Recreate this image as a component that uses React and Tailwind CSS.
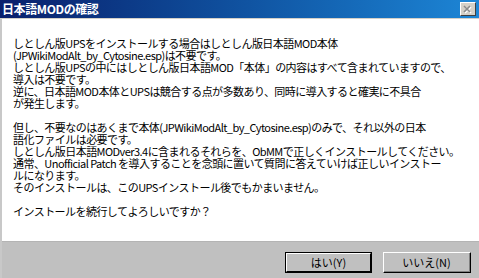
import React from "react";

const lines = [
  "しとしん版UPSをインストールする場合はしとしん版日本語MOD本体",
  "(JPWikiModAlt_by_Cytosine.esp)は不要です。",
  "しとしん版UPSの中にはしとしん版日本語MOD「本体」の内容はすべて含まれていますので、",
  "導入は不要です。",
  "逆に、日本語MOD本体とUPSは競合する点が多数あり、同時に導入すると確実に不具合",
  "が発生します。",
  "",
  "但し、不要なのはあくまで本体(JPWikiModAlt_by_Cytosine.esp)のみで、それ以外の日本",
  "語化ファイルは必要です。",
  "しとしん版日本語MODver3.4に含まれるそれらを、ObMMで正しくインストールしてください。",
  "通常、Unofficial Patch を導入することを念頭に置いて質問に答えていけば正しいインストー",
  "ルになります。",
  "そのインストールは、このUPSインストール後でもかまいません。",
  "",
  "インストールを続行してよろしいですか？",
];

const font = { fontFamily: '"Noto Sans CJK JP", "Noto Sans", sans-serif' };

export default function App() {
  return (
    <div
      className="w-[479px] h-[278px] bg-[#c0c0c0] flex flex-col overflow-hidden text-black"
      style={font}
    >
      <div className="h-[18px] flex items-center justify-between bg-linear-to-r from-[#0a1f6c] to-[#1d86d6] pl-[2px] pr-[3px]">
        <span className="text-white font-bold text-[12px] leading-[18px] tracking-[-0.4px]">
          日本語MODの確認
        </span>
        <div className="w-[16px] h-[14px] bg-[#d4d0c8] border-t border-l border-white border-r border-b border-r-[#404040] border-b-[#404040] flex items-center justify-center">
          <svg width="10" height="9" viewBox="0 0 10 9">
            <path d="M2 2 L8 8 M8 2 L2 8" stroke="#ffffff" strokeWidth="1.6" />
            <path d="M1 1 L7 7 M7 1 L1 7" stroke="#8a8a8a" strokeWidth="1.6" />
          </svg>
        </div>
      </div>
      <div className="h-px bg-[#d4d0c8]" />
      <div className="flex-1 flex flex-col border-l-2 border-[#c8c8c8]">
        <div className="bg-white h-[222px] pt-[18px] pl-[11px]">
          {lines.map((l, i) => (
            <div
              key={i}
              className="h-[12px] leading-[12px] text-[11px] whitespace-nowrap tracking-[-0.55px]"
            >
              {l}
            </div>
          ))}
        </div>
        <div className="h-px bg-[#b4b4b4]" />
        <div className="flex justify-end gap-[11px] pr-[8px] pt-[10px]">
          <div className="w-[87px] h-[21px] border border-black">
            <div className="w-full h-full border-t border-l border-white border-r border-b border-r-black border-b-black flex items-center justify-center text-[11px] leading-none">
              はい(Y)
            </div>
          </div>
          <div className="w-[88px] h-[21px] border-t border-l border-white border-r border-b border-r-black border-b-black">
            <div className="w-full h-full border-r border-b border-[#808080] flex items-center justify-center text-[11px] leading-none">
              いいえ(N)
            </div>
          </div>
        </div>
      </div>
    </div>
  );
}
